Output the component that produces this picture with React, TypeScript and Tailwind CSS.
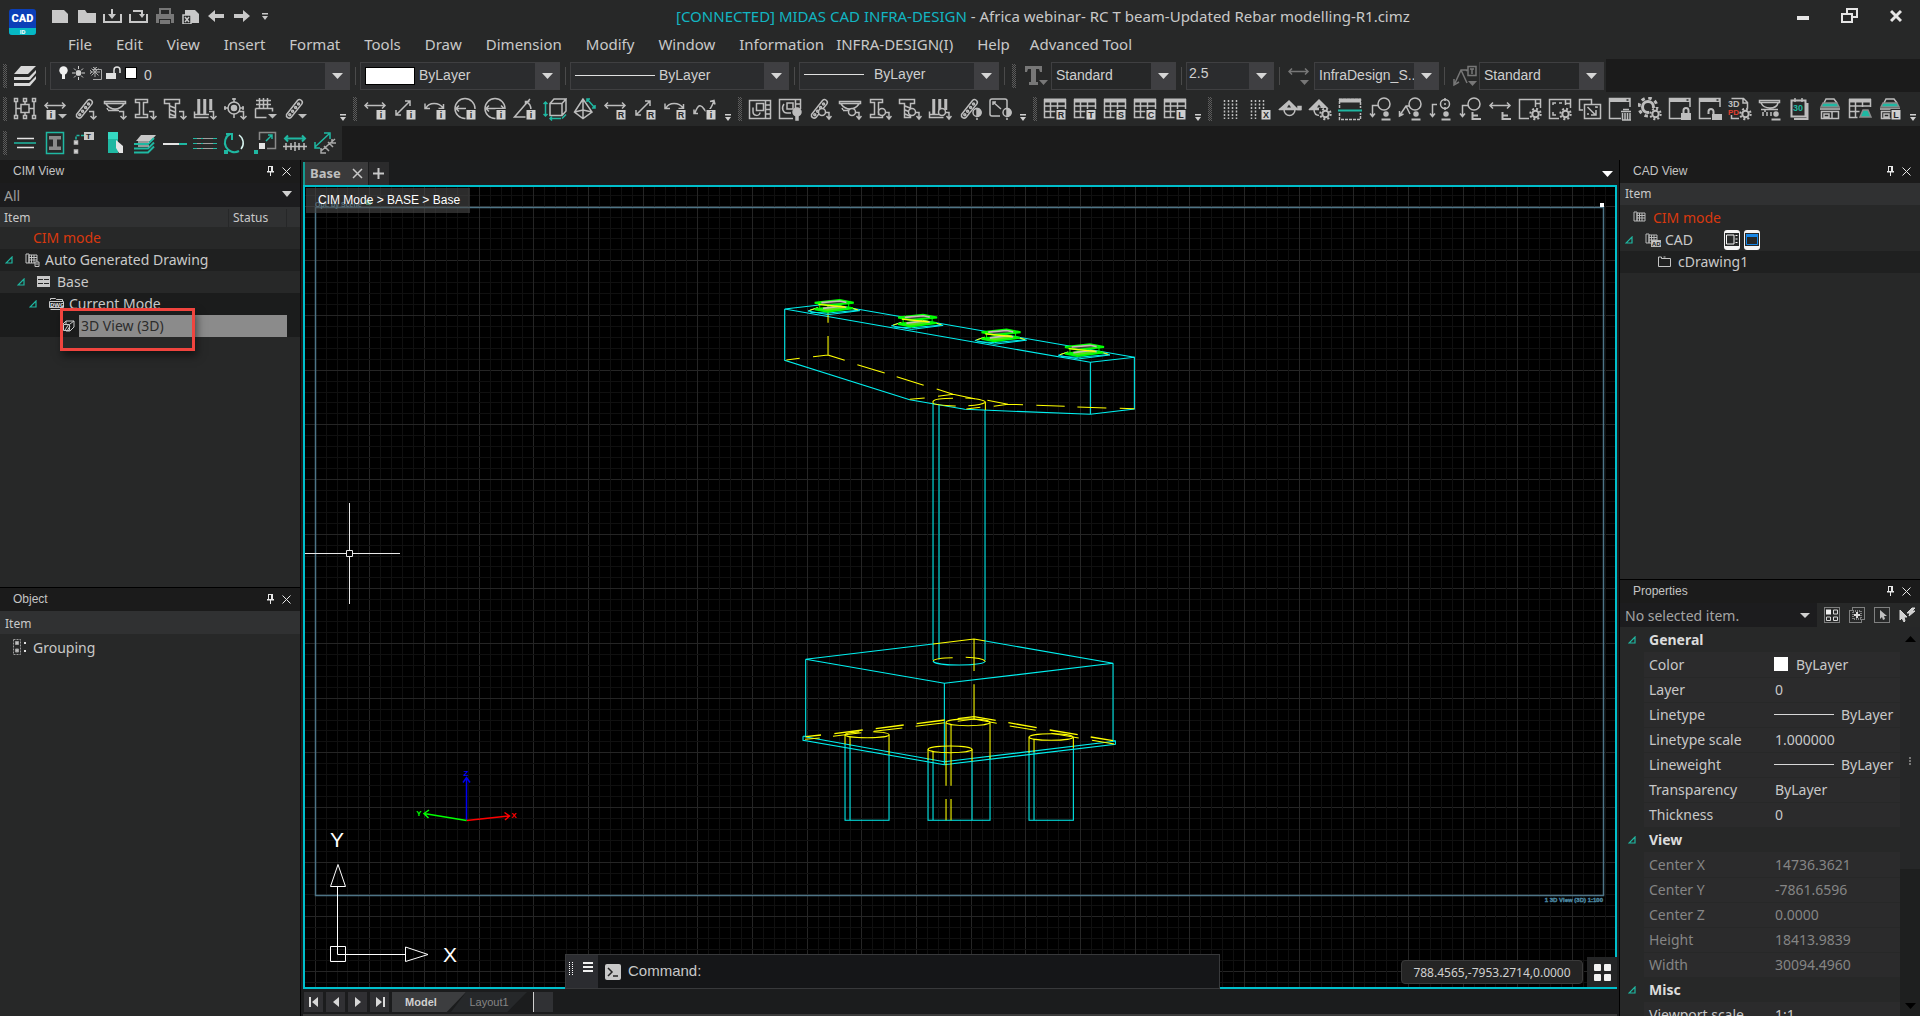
import type { ReactNode } from 'react';
import { clsx } from 'clsx';

const TEAL = '#1fb8a2';

/* ---------- Icons ---------- */

const barShape = (
  <>
    <path d="M3.5 17.5 14.5 3.5a2.8 2.8 0 0 1 4.4 3.4L8 20.4a2.8 2.8 0 0 1-4.5-2.9z" />
    <circle cx="15.5" cy="7" r="1" />
    <circle cx="12.6" cy="10.6" r="1" />
    <circle cx="9.6" cy="14.2" r="1" />
    <circle cx="6.8" cy="17.8" r="1" />
  </>
);

const windowShape = (
  <>
    <path d="M22 10V1.5H1.5v20H13" />
    <path d="M1 3h21" strokeWidth="4" />
    <path d="M18.5 3h2" stroke="#272828" />
  </>
);

const bases: Record<string, ReactNode> = {
  none: null,
  frame: (
    <path d="M1.5 1.5h3v3h-3zM10.5 1.5h3v3h-3zM19.5 1.5h3v3h-3zM1.5 18.5h3v3h-3zM10.5 18.5h3v3h-3zM19.5 18.5h3v3h-3zM3 5v13M21 5v13M8 7.5h8v8H8zM12 5v2M12 16v2M3 11.5h5M16 11.5h5" />
  ),
  span: <path d="M2 8.5h20M5 5.5l-3 3 3 3M19 5.5l3 3-3 3" />,
  bar: barShape,
  dish: <path d="M1.5 4.5h21v2h-21zM3 7c3 4 5 5 9 5s6-1 9-5M5 13.5h11M5 13l-1-2" />,
  beam: <path d="M2.5 2.5h12v3h-4v12h4v3h-12v-3h4v-12h-4z" />,
  bolt: <path d="M1.5 2.5h15v4h-4v14h-6v-14h-5zM7 9l5 2M7 13l5 2M7 17l5 2" />,
  piles: <path d="M5 2v15M6.5 2v15M11 2v15M12.5 2v15M17 2v11M18.5 2v11M1.5 14.5v6h14M2 17.5h14" />,
  target: (
    <>
      <circle cx="11" cy="11" r="6" />
      <circle cx="11" cy="11" r="2.5" fill="currentColor" />
      <path d="M11 1v4M11 17v4M1 11h4M17 11h4M9 2h4M2 9v4M20 9v4" />
    </>
  ),
  mesh: <path d="M6.5 1v10M10.5 1v10M14.5 1v10M3 3.5h15M3 7.5h15M2.5 11.5h17v3M2.5 11.5v9h11" />,
  diag: <path d="M3 18 17 4M12 4h5v5M3 13v5h5" />,
  arc: <path d="M3 11c3-6 13-6 17 0M2 6.5v5h5M20.5 7v4.5h-5" />,
  radius: (
    <>
      <circle cx="12" cy="11.5" r="10" />
      <path d="M3 11.5h10M6 8.5l-3 3 3 3" />
    </>
  ),
  diameter: (
    <>
      <circle cx="12" cy="11.5" r="10" />
      <path d="M3 11.5h18M6 8.5l-3 3 3 3M18 8.5l3 3-3 3" />
    </>
  ),
  angle: <path d="M14 20H1.5L17 2M13 5c3 1 5 4 5 8M12.5 8V4.5h4" />,
  cube: (
    <>
      <path d="M7 6.5h12v12H7zM7 6.5l4-4.5h12l-4 4.5M23 2v12l-4 4.5" />
      <path d="M2.5 5v14M.5 7l2-2 2 2M.5 17l2 2 2-2M7 21.5h11M9 19.5l-2 2 2 2M19 21.5l4-4" stroke={TEAL} />
    </>
  ),
  pyramid: (
    <>
      <path d="M10 2 1.5 15 10 21.5 19 15zM10 2v19M1.5 15 10 13l9 2" />
      <path d="M14 2l8 9M14 5V2h3M22 8v3h-3" stroke={TEAL} />
    </>
  ),
  spline: <path d="M2 16c3-9 6-9 9-4s6 2 10-8M17 4.5l4-1 1 4M1 12.5v4h4" />,
  section: <path d="M1.5 3.5h21v18h-21zM17.5 3.5v18M18 8h4M18 12.5h4M18 17h4M8.5 6.5h7v7h-7zM5 10.5v4c0 5 7 5 7 1" />,
  sectionBulb: (
    <>
      <path d="M15 21.5H1.5v-19h21V12M17.5 3v8M18 7h4M6 7c-3 4-1 9 3 9h4M9 6h6v6H9z" />
      <circle cx="19" cy="15" r="4" fill="currentColor" />
      <path d="M18 19v4h2v-4" fill="currentColor" />
    </>
  ),
  plate: <path d="M12 19H4c-1 0-2-1-2-2V4c0-1 1-2 2-2h13c1 0 2 1 2 2v7M5 5l8 7M5 8V5h3" />,
  table: (
    <>
      <path d="M1.5 2v18.5h10M22.5 2v10M7.5 4v16M14.5 4v8M1.5 9h21M1.5 14.5h11" />
      <path d="M1 3.5h22" strokeWidth="4" />
    </>
  ),
  dots: <path d="M6.5 3v19M10.5 3v19M14.5 3v19M18.5 3v19" strokeDasharray="2 1.5" />,
  dotsHalf: <path d="M3.5 3v19M7.5 3v19M11.5 3v9M15.5 3v9" strokeDasharray="2 1.5" />,
  marker: (
    <>
      <path d="M1 12.5h22M6 12.5a5.5 6 0 0 0 11 0" />
      <path d="M2 12l9-8 8 8z" fill="currentColor" />
      <path d="M9 10.5l2-3 2 3z" fill="#272828" stroke="none" />
      <path d="M20 9.5h3v3h-3z" fill="currentColor" />
    </>
  ),
  markerHalf: (
    <>
      <path d="M1 12.5h12M6 12.5c0 5 3 6 6 6" />
      <path d="M2 12l9-9 9 9z" fill="currentColor" />
      <path d="M9 10.5l2-3 2 3z" fill="#272828" stroke="none" />
    </>
  ),
  cut: (
    <>
      <path d="M1.5 11V2.5h21V11M1.5 16v6.5h21V16" strokeDasharray="3 1" />
      <path d="M1 3.5h22" strokeWidth="4" />
      <path d="M0 13.5h24" stroke={TEAL} strokeWidth="2" />
    </>
  ),
  leaderRound: (
    <>
      <circle cx="16" cy="7" r="6" />
      <path d="M10 8.5H4.5V19M2 16.5l2.5 3 2.5-3" />
    </>
  ),
  leaderSplit: (
    <>
      <circle cx="17" cy="7" r="6" />
      <path d="M11 9H8L2 18M8 9l4 8M1.5 14v5l4-2" />
    </>
  ),
  leaderTarget: (
    <>
      <circle cx="17" cy="7" r="4.5" />
      <path d="M17 1v3M17 10v3M9 7.5H4.5V19M2 16.5l2.5 3 2.5-3M16 7h2" />
    </>
  ),
  page: <path d="M12 21.5H1.5v-19h21v9M17.5 3v7M18 6.5h4" />,
  pageFit: <path d="M12 21.5H1.5v-19h21v9M17.5 3v5M5 8V6h3M11 6h3M5 15v3h3M18 6.5h4" />,
  copyFit: <path d="M1.5 10V2.5h12v5M5 13H1.5v-3M6.5 7.5h16v14h-16zM9.5 10l8 8M18 13v5h-5M10 18v-2M19 11v-1h-2" />,
  window: windowShape,
  gear: (
    <g>
      <circle cx="10" cy="10" r="5.5" strokeWidth="3" />
      <circle cx="10" cy="10" r="9" strokeWidth="3" strokeDasharray="3.5 3.56" />
    </g>
  ),
  pdf: (
    <>
      <path d="M3.5 1.5h12l4 4v6M15 2v4h4M3.5 18v3.5h8" />
      <rect x="0" y="3" width="12" height="15" fill="#272828" stroke="none" />
      <text x="0" y="10" fontSize="9" fontWeight="700" fill="currentColor" stroke="none">3D</text>
      <text x="0" y="18" fontSize="8" fontWeight="700" fill="#e0402f" stroke="none">PDF</text>
    </>
  ),
  shower: <path d="M1.5 3.5h20v2h-20zM3 6c2 4 5 5 9 5s7-1 8-5M3 12.5h17M5 15v4M9 15v4M13 15v4M7 12v3" />,
  calendar: (
    <>
      <path d="M3.5 3.5h14v16h-14zM19.5 6v16H6" strokeWidth="2" />
      <path d="M7 1v4M14 1v4" />
      <text x="5" y="14" fontSize="9" fontWeight="700" fill={TEAL} stroke="none">30</text>
    </>
  ),
  house: (
    <>
      <path d="M6 6l2-4h8l3 4M2 12h20M3.5 14.5h17v7h-17zM6 17h5v3H6zM14 15v6" />
      <path d="M3 10l2-4h14l2 4z" fill={TEAL} stroke="#8a8a8a" />
    </>
  ),
  tableHouse: (
    <>
      <path d="M1.5 2v18.5h8M22.5 2v8M7.5 4v16M14.5 4v6M1.5 9h21M1.5 14.5h10" />
      <path d="M1 3.5h22" strokeWidth="4" />
      <path d="M12 20l3-7h5l3 7z" fill={TEAL} stroke="#8a8a8a" />
    </>
  ),
  /* drawing toolbar */
  centerLine: (
    <>
      <path d="M4 7.5h17M4 16.5h17" stroke="#e4e4e4" />
      <path d="M1 12h22" stroke={TEAL} />
    </>
  ),
  profile: (
    <>
      <path d="M3.5 1.5h17v21h-17z" stroke={TEAL} />
      <path d="M6 5h12v3.5h-4v7h4V19H6v-3.5h4v-7H6z" fill="#8a8a8a" stroke="none" />
    </>
  ),
  leaderText: (
    <>
      <path d="M3 13V4.5h10" stroke={TEAL} strokeDasharray="3 1.5" />
      <path d="M1.5 10h3v3h-3zM1.5 19h3v3h-3z" fill="#e4e4e4" />
      <path d="M11 1h10v8H11z" fill="#c8c8c8" stroke="none" />
      <text x="13" y="8" fontSize="8" fontWeight="700" fill="#272828" stroke="none">T</text>
    </>
  ),
  fill: (
    <>
      <path d="M5 1h10v21H5z" fill={TEAL} stroke="none" />
      <path d="M5 1h10v7H5z" fill="#35d8c2" stroke="none" />
      <path d="M13 9l7 6v7h-4l-3-5z" fill="#e4e4e4" stroke="none" />
    </>
  ),
  layersTeal: (
    <>
      <path d="M8 4h15l-5 6H3z" fill="#c8c8c8" stroke="none" />
      <path d="M1 13h14l6-6M1 17.5h14l6-6M1 21.5h14l6-6" stroke={TEAL} strokeWidth="2" />
      <path d="M5 11h11M5 15h11" />
    </>
  ),
  lineMix: (
    <>
      <path d="M0 13h16" stroke="#e4e4e4" strokeWidth="2" />
      <path d="M16 13h8" stroke={TEAL} strokeWidth="2" />
    </>
  ),
  lines: (
    <>
      <path d="M0 7.5h24M0 12.5h24M0 17.5h24" stroke={TEAL} strokeWidth="1" />
      <path d="M4 7.5h4M10 7.5h10M4 12.5h4M10 12.5h10M4 17.5h4M10 17.5h10" stroke="#a0a0a0" strokeWidth="1" />
    </>
  ),
  rotate: (
    <>
      <path d="M7 3a9.5 9.5 0 0 0 9 17M3 3h6v6" stroke={TEAL} strokeWidth="2" />
      <path d="M16 4a9.5 9.5 0 0 1 2 14" stroke="#d8f5f0" />
      <path d="M1 19h4v4H1z" fill={TEAL} stroke="none" />
    </>
  ),
  scale: (
    <>
      <path d="M6.5 9V1.5h16v16H14" stroke="#8a8a8a" />
      <path d="M13 10l6-6M15 4h4v4" stroke={TEAL} />
      <path d="M6 12h6v6H6z" fill="#e4e4e4" stroke="none" />
      <path d="M1 19h4v4H1z" fill={TEAL} stroke="none" />
    </>
  ),
  stretch: (
    <>
      <path d="M2 7.5h20M5 4.5l-3 3 3 3M19 4.5l3 3-3 3" stroke={TEAL} strokeWidth="2" />
      <path d="M0 15.5h24M3 12v7M8 12v7M12 11v9M16 12v7M21 12v7" />
    </>
  ),
  offset: (
    <>
      <path d="M2 16 16 3M11 2h6v6M2 11v6h5" stroke={TEAL} />
      <path d="M8 20 22 8M11 15l5 5M15 11l5 5M19 8v4h4M8 17v5h5" stroke="#a8a8a8" />
    </>
  ),
};

const badges: Record<string, ReactNode> = {
  turn: <path d="M16 14.5h4.5v7M17.5 19l3 3 3-3" />,
  caret: <path d="M15 17h9l-4.5 4.5z" fill="currentColor" stroke="none" />,
  shape: (
    <>
      <circle cx="14" cy="15" r="3.5" fill="#272828" />
      <path d="M18 15.5h3v6M18.5 19l2.5 3 2.5-3" />
    </>
  ),
  contrast: (
    <>
      <circle cx="19" cy="15.5" r="4" />
      <path d="M19 11.5a4 4 0 0 1 0 8z" fill="currentColor" />
      <path d="M18 22h2" />
    </>
  ),
  gear: (
    <g>
      <rect x="11" y="11" width="13" height="13" fill="#272828" stroke="none" />
      <circle cx="17.5" cy="17" r="3.2" strokeWidth="2" />
      <circle cx="17.5" cy="17" r="5.2" strokeWidth="2" strokeDasharray="2 2.08" />
    </g>
  ),
  person: (
    <>
      <circle cx="18" cy="17" r="2" fill="currentColor" />
      <path d="M13.5 22.5h9" strokeWidth="2" />
    </>
  ),
  legend: <path d="M14.5 15v8M15 18.5h5M15 22h8" strokeWidth="2" />,
  trash: <path d="M13 14.5h10M15 12.5h6M14.5 16v7M17 16v7M19.5 16v7M22 16v7M14 23h9" />,
  lock: (
    <>
      <path d="M13 16h10v7H13z" fill="currentColor" stroke="none" />
      <path d="M15.5 16v-2.5a2.5 2.5 0 0 1 5 0V16" strokeWidth="2" />
    </>
  ),
  unlock: (
    <>
      <path d="M14 17h10v6H14z" fill="currentColor" stroke="none" />
      <path d="M10.5 17v-2.5a2.5 2.5 0 0 1 5 0V17" strokeWidth="2" />
    </>
  ),
};

function Glyph({ base, badge }: { base: string; badge?: string }) {
  const letter = badge && badge.length === 1 ? badge : '';
  const left = base === 'span' && badge === 'info';
  return (
    <svg width="24" height="24" viewBox="0 0 24 24" fill="none" stroke="currentColor" strokeWidth="1.5" fontFamily="Liberation Sans, sans-serif">
      {bases[base]}
      {badge && badges[badge]}
      {left && badges.caret}
      {(letter || left) && (
        <>
          <rect x={left ? 3 : 13} y="12.5" width="10" height="10.5" fill="#cfcfcf" stroke="#272828" strokeWidth="1" />
          <text x={left ? 8 : 18} y="21" fontSize="9" fontWeight="700" textAnchor="middle" fill="#272828" stroke="none">
            {left ? 'i' : letter}
          </text>
        </>
      )}
    </svg>
  );
}

type Tool = [label: string, base: string, badge?: string];

const structureTools: Tool[] = [
  ['Frame', 'frame'],
  ['Span info', 'span', 'info'],
  ['Rebar', 'bar', 'turn'],
  ['Deck', 'dish', 'turn'],
  ['Girder', 'beam', 'turn'],
  ['Pier', 'bolt', 'turn'],
  ['Piles', 'piles', 'turn'],
  ['Target', 'target', 'turn'],
  ['Mesh', 'mesh', 'caret'],
  ['Rebar list', 'bar', 'caret'],
];
const dimensionTools: Tool[] = [
  ['Linear', 'span', 'i'],
  ['Aligned', 'diag', 'i'],
  ['Arc length', 'arc', 'i'],
  ['Radius', 'radius', 'i'],
  ['Diameter', 'diameter', 'i'],
  ['Angle', 'angle', 'i'],
  ['Box', 'cube'],
  ['Slope', 'pyramid'],
  ['Linear rebar', 'span', 'R'],
  ['Aligned rebar', 'diag', 'R'],
  ['Arc rebar', 'arc', 'R'],
  ['Spline', 'spline', 'i'],
];
const sectionTools: Tool[] = [
  ['Section view', 'section'],
  ['Section light', 'sectionBulb'],
  ['Rebar shape', 'bar', 'shape'],
  ['Deck shape', 'dish', 'shape'],
  ['Girder shape', 'beam', 'shape'],
  ['Pier shape', 'bolt', 'shape'],
  ['Pile shape', 'piles', 'shape'],
  ['Rebar display', 'bar', 'contrast'],
  ['Plate display', 'plate', 'contrast'],
];
const tableTools: Tool[] = [
  ['Rebar table', 'table', 'R'],
  ['Text table', 'table', 'T'],
  ['Section table', 'table', 'S'],
  ['Column table', 'table', 'C'],
  ['Layer table', 'table', 'L'],
];
const drawingTools: Tool[] = [
  ['Guides', 'dots'],
  ['Remove guides', 'dotsHalf', 'X'],
  ['Level mark', 'marker'],
  ['Level settings', 'markerHalf', 'gear'],
  ['Cut line', 'cut'],
  ['Balloon', 'leaderRound', 'person'],
  ['Split balloon', 'leaderSplit', 'person'],
  ['Target balloon', 'leaderTarget', 'person'],
  ['Balloon align', 'leaderRound', 'legend'],
  ['Span align', 'span', 'legend'],
  ['Sheet settings', 'page', 'gear'],
  ['Viewport settings', 'pageFit', 'gear'],
  ['Copy fit', 'copyFit'],
  ['Delete view', 'window', 'trash'],
  ['Settings', 'gear', 'gear'],
  ['Lock view', 'window', 'lock'],
  ['Unlock view', 'window', 'unlock'],
  ['3D PDF', 'pdf', 'gear'],
  ['Deck person', 'shower', 'person'],
  ['Schedule', 'calendar'],
  ['Quantity', 'house'],
  ['Quantity table', 'tableHouse'],
  ['Quantity layer', 'house', 'L'],
];
const editTools: Tool[] = [
  ['Center line', 'centerLine'],
  ['Profile', 'profile'],
  ['Leader', 'leaderText'],
  ['Fill', 'fill'],
  ['Layers', 'layersTeal'],
  ['Line', 'lineMix'],
  ['Multi line', 'lines'],
  ['Rotate', 'rotate'],
  ['Scale', 'scale'],
  ['Stretch', 'stretch'],
  ['Offset', 'offset'],
];

function Grip() {
  return (
    <span className="flex w-[10px] shrink-0 items-center justify-center">
      <svg width="4" height="24" viewBox="0 0 4 24" fill="#5c5c5c">
        {Array.from({ length: 12 }, (_, i) => (
          <path key={i} d={`M0 ${i * 2}h1v1H0zM2 ${i * 2}h1v1H2zM1 ${i * 2 + 1}h1v1H1zM3 ${i * 2 + 1}h1v1H3z`} />
        ))}
      </svg>
    </span>
  );
}

function Overflow() {
  return (
    <button aria-label="More tools" className="flex w-[15px] shrink-0 items-end justify-center pb-1 text-[#d0d0d0]">
      <svg width="6" height="8" viewBox="0 0 6 8" fill="currentColor">
        <path d="M0 0h6v1.5H0zM0 3h6L3 7z" />
      </svg>
    </button>
  );
}

function ToolGroup({ tools }: { tools: Tool[] }) {
  return (
    <>
      <Grip />
      {tools.map(([label, base, badge]) => (
        <button key={label} aria-label={label} className="flex w-[30px] shrink-0 items-center justify-center text-[#bdbdbd]">
          <Glyph base={base} badge={badge} />
        </button>
      ))}
    </>
  );
}

/* ---------- Header ---------- */

const menus = ['File', 'Edit', 'View', 'Insert', 'Format', 'Tools', 'Draw', 'Dimension', 'Modify', 'Window', 'Information'];

const quickIcons: [string, ReactNode][] = [
  ['New', <path d="M1 2h12l4 4v9H1z" />],
  ['Open', <path d="M1 2h7l2 3h9v10H1z" />],
  ['Save', <path d="M0 6h2v7h15V6h2v9H0zM8 1h2v5h3l-4 5-4-5h3z" />],
  ['Save as', <path d="M0 6h2v7h15V6h2v9H0zM4 2h10v4h2l-3 4-3-4h2V4H4z" />],
  ['Print', <path fill="#777" d="M4 0h12v6h3v9h-3v-4H4v4H1V6h3zM6 2v4h8V2zM5 12h10v4H5z" />],
  ['Close drawing', (
    <>
      <path d="M4 2h10l4 4v9H4z" />
      <path d="M2 7h8v9H2z" fill="#272828" stroke="#c8c8c8" strokeWidth="1.5" />
      <path d="M4 9l4 5M8 9l-4 5" stroke="#c8c8c8" strokeWidth="1.5" />
    </>
  )],
  ['Undo', <path d="M1 8l7-6v4h9v4H8v4z" />],
  ['Redo', <path d="M17 8l-7-6v4H1v4h9v4z" />],
];

function TitleBar() {
  return (
    <header className="flex h-[59px] shrink-0 text-[#c9c9c9]">
      <div className="w-[43px] shrink-0 pt-[9px] pl-[9px]">
        <div className="flex h-[26px] w-[27px] flex-col overflow-hidden rounded-[3px] bg-[#0b3fb8] text-center font-['Roboto',sans-serif] text-white">
          <span className="h-[19px] text-[11px] leading-[19px] font-black">CAD</span>
          <span className="h-[7px] bg-[#06b9c4] text-[6px] leading-[7px] font-bold">ID</span>
        </div>
      </div>
      <div className="flex min-w-0 flex-1 flex-col">
        <div className="flex h-8 items-center">
          <div className="flex w-[633px] shrink-0 items-center pl-2">
            {quickIcons.map(([label, icon]) => (
              <button key={label} aria-label={label} className="w-[26px] shrink-0">
                <svg width="20" height="16" viewBox="0 0 20 16" fill="#c8c8c8" fillRule="evenodd">{icon}</svg>
              </button>
            ))}
            <button aria-label="Customize quick access" className="pl-[3px]">
              <svg width="6" height="8" viewBox="0 0 6 8" fill="#c8c8c8"><path d="M0 1h6v1.5H0zM0 4h6L3 8z" /></svg>
            </button>
          </div>
          <h1 className="flex-1 truncate text-[15px]">
            <span className="text-[#12b5c2]">[CONNECTED] MIDAS CAD INFRA-DESIGN</span> - Africa webinar- RC T beam-Updated Rebar modelling-R1.cimz
          </h1>
          <div className="flex shrink-0 items-center gap-8 pr-[18px] text-[#e6e6e6]">
            <button aria-label="Minimize"><svg width="12" height="14" viewBox="0 0 12 14"><path d="M0 7h12v4H0z" fill="currentColor" /></svg></button>
            <button aria-label="Restore"><svg width="17" height="16" viewBox="0 0 17 16" fill="none" stroke="currentColor" strokeWidth="2"><path d="M1 6h10v8H1zM6 5V1h10v8h-4" /></svg></button>
            <button aria-label="Close"><svg width="12" height="14" viewBox="0 0 12 14" stroke="currentColor" strokeWidth="3"><path d="M1 2l10 10M11 2 1 12" /></svg></button>
          </div>
        </div>
        <nav className="flex h-6 items-center gap-6 pl-[25px] text-[15px]">
          {menus.map((m) => <button key={m}>{m}</button>)}
          <button className="-ml-3 whitespace-nowrap">INFRA-DESIGN(I)</button>
          <button>Help</button>
          <button className="-ml-1">Advanced Tool</button>
        </nav>
      </div>
    </header>
  );
}

interface ComboProps {
  label: string;
  value: string;
  className: string;
  selectClass?: string;
  children?: ReactNode;
}

function Combo({ label, value, className, selectClass = 'pl-[4px]', children }: ComboProps) {
  return (
    <div className={clsx('relative flex h-7 shrink-0 border border-[#3f3f41]', className)}>
      <select aria-label={label} className={clsx("w-full appearance-none bg-transparent font-['Liberation_Sans',sans-serif] text-[14px] text-[#cfcfcf] outline-none", selectClass)}>
        <option>{value}</option>
      </select>
      {children && <div className="pointer-events-none absolute inset-y-0 left-0 flex items-center">{children}</div>}
      <span className="pointer-events-none absolute inset-y-0 right-0 flex w-6 items-center justify-center bg-[#3f3f42] text-[#d6d6d6]">
        <svg width="11" height="6" viewBox="0 0 11 6" fill="currentColor"><path d="M0 0h11L5.5 6z" /></svg>
      </span>
    </div>
  );
}

const Divider = () => <span className="mr-[4px] ml-[5px] h-[18px] w-px shrink-0 bg-[#4a4a4a]" />;

function PropertyBar() {
  return (
    <div className="flex h-[33px] shrink-0 bg-[#1b1b1b]">
      <div className="flex items-center bg-[#272828] pr-[2px]">
        <Grip />
        <button aria-label="Layer manager" className="flex w-[30px] justify-center">
          <svg width="24" height="22" viewBox="0 0 24 22" fill="#d8d8d8">
            <path d="M8 1h15l-8 8H1zM1 12h15l7-7v3l-6 7H1zM1 18h15l7-7v3l-6 7H1z" />
          </svg>
        </button>
        <Divider />
        <Combo label="Layer" value="0" className="w-[300px] bg-[#2b2c2e]" selectClass="pl-[93px]">
          <div className="flex gap-[4px] pb-[5px] pl-[8px] text-[#d0d0d0]">
            <svg width="9" height="14" viewBox="0 0 9 14" fill="#f0f0f0"><circle cx="4.5" cy="4.5" r="4.2" /><path d="M3 8h3v5H3z" /></svg>
            <svg width="13" height="14" viewBox="0 0 13 14" stroke="currentColor"><circle cx="6.5" cy="7" r="2.5" fill="currentColor" /><path d="M6.5 0v3M6.5 11v3M0 7h3M10 7h3M2 2.5l2 2M11 2.5l-2 2M2 11.5l2-2M11 11.5l-2-2" /></svg>
            <svg width="13" height="14" viewBox="0 0 13 14" fill="none" stroke="#a8a8a8"><path d="M4 3.5h8.5v10H4M6 1v10M1 6h10M2.5 2.5l7 7M9.5 2.5l-7 7M4 1l2 2 2-2M1 4l2 2-2 2" /></svg>
            <svg width="15" height="14" viewBox="0 0 15 14" fill="#e0e0e0"><path d="M0 7h10v6H0z" /><path d="M8 7V4a3 3 0 0 1 6 0v3" fill="none" stroke="#e0e0e0" strokeWidth="1.5" /></svg>
            <span className="mt-px h-3 w-3 border border-black bg-white" />
          </div>
        </Combo>
        <Divider />
        <Combo label="Color" value="ByLayer" className="w-[200px] bg-[#2b2c2e]" selectClass="pl-[58px]">
          <span className="ml-[4px] h-[18px] w-[50px] border border-black bg-white" />
        </Combo>
        <Divider />
        <Combo label="Linetype" value="ByLayer" className="w-[219px] bg-[#2b2c2e]" selectClass="pl-[88px]">
          <span className="ml-[4px] h-px w-20 bg-[#e0e0e0]" />
        </Combo>
        <Divider />
        <Combo label="Lineweight" value="ByLayer" className="w-[200px] bg-[#2b2c2e]" selectClass="pl-[74px] pb-[3px]">
          <span className="mb-[2px] ml-[4px] h-px w-[60px] bg-[#e0e0e0]" />
        </Combo>
        <Divider />
        <Grip />
        <button aria-label="Text style" className="w-8 pl-[5px]">
          <svg width="24" height="22" viewBox="0 0 24 22" fill="#777"><path d="M1 1h17v6h-2l-1-3h-3v13h2v3H5v-3h2V4H4L3 7H1zM15 15h9l-4.5 5z" /></svg>
        </button>
        <Combo label="Text style" value="Standard" className="w-[125px] bg-[#262728]" />
        <Divider />
        <Combo label="Text height" value="2.5" className="w-[88px] bg-[#2b2c2e]" selectClass="pl-[2px] pb-[4px]" />
        <Divider />
        <button aria-label="Dimension style" className="w-[30px] pl-[4px]">
          <svg width="24" height="22" viewBox="0 0 24 22" fill="none" stroke="#777" strokeWidth="1.5"><path d="M1 6.5h19M4 3.5l-3 3 3 3M17 3.5l3 3-3 3" /><path d="M12 15h9l-4.5 5z" fill="#777" stroke="none" /></svg>
        </button>
        <Combo label="Dimension style" value="InfraDesign_S..." className="w-[125px] bg-[#2b2c2e]" />
        <Divider />
        <button aria-label="Leader style" className="w-[30px] pl-[4px]">
          <svg width="24" height="22" viewBox="0 0 24 22" fill="none" stroke="#777" strokeWidth="1.5"><path d="M2 18 8 5h6l-1 1M8 5l6 13M1 14v6l5-3M15 1.5h8v9h-8zM17 4h4M19 4v5" /><path d="M15 16h9l-4.5 5z" fill="#777" stroke="none" /></svg>
        </button>
        <Combo label="Leader style" value="Standard" className="w-[125px] bg-[#262728]" />
      </div>
    </div>
  );
}

/* ---------- Panels ---------- */

function PanelHeader({ title }: { title: string }) {
  return (
    <div className="flex h-[23px] shrink-0 items-center bg-[#1b1b1b] pr-[9px] pb-px pl-[13px]">
      <h2 className="flex-1 font-['Liberation_Sans',sans-serif] text-[12px] text-[#c4c4c4]">{title}</h2>
      <button aria-label={`Pin ${title}`} className="mr-[7px]">
        <svg width="9" height="10" viewBox="0 0 9 10" fill="#e8e8e8"><path d="M2 0h5v5h1v1.5H5V10H4V6.5H1V5h1zM3 1v4h2V1z" fillRule="evenodd" /></svg>
      </button>
      <button aria-label={`Close ${title}`}>
        <svg width="9" height="9" viewBox="0 0 9 9" stroke="#e8e8e8"><path d="M.5.5l8 8M8.5.5l-8 8" /></svg>
      </button>
    </div>
  );
}

function Expander({ label }: { label: string }) {
  return (
    <button aria-label={`Collapse ${label}`} className="flex w-5 shrink-0 items-center">
      <svg width="8" height="8" viewBox="0 0 8 8" fill="none" stroke={TEAL} strokeWidth="1.2"><path d="M7 1v6H1z" /></svg>
    </button>
  );
}

const gridPage = <path d="M1 1h3v9H1zM4 2h8v8H4zM6.5 2v8M9 2v8M4 4.5h8M4 7h8" />;

function CimView() {
  return (
    <section className="flex h-[428px] shrink-0 flex-col border-b border-black">
      <PanelHeader title="CIM View" />
      <div className="relative flex h-6 shrink-0 bg-[#1c1c1e]">
        <select aria-label="Filter" className="w-full appearance-none bg-transparent pl-[4px] text-[14px] text-[#9c9c9c]">
          <option>All</option>
        </select>
        <svg className="pointer-events-none absolute top-2 right-2" width="10" height="6" viewBox="0 0 10 6" fill="#d0d0d0"><path d="M0 0h10L5 6z" /></svg>
      </div>
      <div className="flex h-5 shrink-0 items-end bg-[#303132] pl-1 text-[12px] leading-[18px]">
        <span className="flex-1">Item</span>
        <span className="w-[58px] border-l border-[#262728] pl-[4px]">Status</span>
        <span className="w-[14px] border-l border-[#262728]">&nbsp;</span>
      </div>
      <ul className="text-[14px] leading-[22px]">
        <li className="pl-[33px] text-[#d8380f]">CIM mode</li>
        <li className="flex bg-[#1f2020] pl-[5px]">
          <Expander label="Auto Generated Drawing" />
          <svg className="mt-[4px] mr-[5px] shrink-0" width="15" height="14" viewBox="0 0 15 14" fill="none" stroke="#c4c4c4">
            {gridPage}
            <path d="M10 9h4v4.5h-4zM10.5 11h3" fill="#1f2020" />
          </svg>
          Auto Generated Drawing
        </li>
        <li className="flex pl-[17px]">
          <Expander label="Base" />
          <svg className="mt-[5px] mr-[7px] shrink-0" width="13" height="11" viewBox="0 0 13 11" fill="#c8c8c8"><path d="M0 0h13v11H0zM1 3v1h5V3zM7 3v1h5V3zM1 7v1h5V7zM7 7v1h5V7z" fillRule="evenodd" /></svg>
          Base
        </li>
        <li className="flex bg-[#1b1c1c] pl-[29px]">
          <Expander label="Current Mode" />
          <svg className="mt-[4px] mr-[5px] shrink-0" width="15" height="14" viewBox="0 0 15 14" fill="none" stroke="#c8c8c8">
            <path d="M1.5 3V1.5h5l1 1h6V4M1.5 12.5h12M.5 4.5h14v6H.5z" />
            <text x="1" y="10" fontSize="6" fontWeight="700" fill="#e0e0e0" stroke="none">DWG</text>
          </svg>
          Current Mode
        </li>
        <li className="relative flex bg-[#1b1c1c] pl-[62px]">
          <svg className="mt-[4px] mr-[4px] shrink-0" width="13" height="13" viewBox="0 0 13 13" fill="none" stroke="#c8c8c8"><path d="M1 5l3-3h8v6l-4 4H4M4 2v4M1.5 5.5h6v6h-6zM8 5l4-3M3 11l4-6M5 12l3-5" /></svg>
          <span className="mr-[13px] flex-1 bg-[#8b8b8b] pl-[2px] text-[#2c2c2c]">3D View (3D)</span>
          <span className="pointer-events-none absolute -top-[7px] left-[60px] h-[43px] w-[135px] border-[3px] border-[#f0443e] shadow-[2px_5px_8px_rgba(0,0,0,0.5)]" />
        </li>
      </ul>
    </section>
  );
}

function ObjectPanel() {
  return (
    <section className="flex-1">
      <PanelHeader title="Object" />
      <div className="flex h-[23px] items-end bg-[#303132] pl-[5px] text-[12px] leading-[20px]">Item</div>
      <div className="flex h-[26px] items-center pl-[13px] text-[14px]">
        <svg className="mr-[6px]" width="14" height="16" viewBox="0 0 14 16" fill="none" stroke="#9a9a9a">
          <path d="M.5.5h7v15h-7z" strokeDasharray="2 1" />
          <path d="M2.5 2.5h3v3h-3zM2.5 10h3v3h-3z" fill="#c0c0c0" />
          <path d="M11 3h2v2h-2zM11 11h2v2h-2z" fill="#e0e0e0" stroke="none" />
        </svg>
        Grouping
      </div>
    </section>
  );
}

function CadView() {
  return (
    <section className="flex h-[420px] shrink-0 flex-col border-b border-black">
      <PanelHeader title="CAD View" />
      <div className="flex h-[22px] shrink-0 items-center bg-[#303132] pl-[5px] text-[12px]">Item</div>
      <ul className="pt-[2px] text-[14px] leading-[22px]">
        <li className="flex pl-[13px] text-[#d8380f]">
          <svg className="mt-[4px] mr-[7px]" width="13" height="12" viewBox="0 0 13 12" fill="none" stroke="#b8b8b8">{gridPage}</svg>
          CIM mode
        </li>
        <li className="flex items-center pl-[5px]">
          <Expander label="CAD" />
          <svg className="mr-[4px]" width="16" height="14" viewBox="0 0 16 14" fill="none" stroke="#b8b8b8">
            {gridPage}
            <rect x="6.5" y="7.5" width="9" height="6" fill="#c8c8c8" />
            <text x="7" y="13" fontSize="6" fontWeight="700" fill="#262828" stroke="none">AD</text>
          </svg>
          CAD
          <button aria-label="Model sheet" className="ml-[31px]">
            <svg width="16" height="20" viewBox="0 0 16 20"><rect width="16" height="20" rx="3" fill="#f4f4f4" /><path d="M1 3h14v13H1z" fill="#262828" /><path d="M2.5 5h7.5v9H2.5zM11.5 5.5h2M11.5 9h2M11.5 12.5h2" stroke="#f4f4f4" fill="none" /></svg>
          </button>
          <button aria-label="Layout sheet" className="ml-[4px]">
            <svg width="16" height="20" viewBox="0 0 16 20"><rect width="16" height="20" rx="3" fill="#f4f4f4" /><path d="M1 3h14v13H1z" fill="#262828" /><path d="M2.5 6.5h11v8h-11z" stroke="#1687e8" fill="none" /><path d="M2 4h12v3H2z" fill="#1687e8" /></svg>
          </button>
        </li>
        <li className="flex bg-[#1f2020] pl-[38px]">
          <svg className="mt-[5px] mr-[7px]" width="13" height="11" viewBox="0 0 13 11" fill="none" stroke="#c4c4c4"><path d="M.5 10.5V1h3v1.5h9v8zM5.5 1h2" /></svg>
          cDrawing1
        </li>
      </ul>
    </section>
  );
}

interface PropertyRow {
  name: string;
  value: string;
  mark?: 'swatch' | 'line';
}

const propertyGroups: { title: string; muted?: boolean; rows: PropertyRow[] }[] = [
  {
    title: 'General',
    rows: [
      { name: 'Color', value: 'ByLayer', mark: 'swatch' },
      { name: 'Layer', value: '0' },
      { name: 'Linetype', value: 'ByLayer', mark: 'line' },
      { name: 'Linetype scale', value: '1.000000' },
      { name: 'Lineweight', value: 'ByLayer', mark: 'line' },
      { name: 'Transparency', value: 'ByLayer' },
      { name: 'Thickness', value: '0' },
    ],
  },
  {
    title: 'View',
    muted: true,
    rows: [
      { name: 'Center X', value: '14736.3621' },
      { name: 'Center Y', value: '-7861.6596' },
      { name: 'Center Z', value: '0.0000' },
      { name: 'Height', value: '18413.9839' },
      { name: 'Width', value: '30094.4960' },
    ],
  },
  { title: 'Misc', rows: [{ name: 'Viewport scale', value: '1:1' }] },
];

const selectionIcons: [string, ReactNode][] = [
  ['Quick select', (
    <>
      <path d="M.5.5h15v15H.5z" strokeDasharray="1 1" />
      <path d="M9.5 3h4v4h-4zM2.5 10h4v3.5h-4zM9.5 10h4v3.5h-4z" />
      <path d="M2 2.5h5v5H2z" fill="#f0f0f0" stroke="none" />
    </>
  )],
  ['Add to selection', (
    <>
      <path d="M3.5.5h12v12h-3v3H.5v-12h3z" strokeDasharray="1 1" />
      <path d="M4 4h8v8H4z" strokeDasharray="1 1" />
      <path d="M8 5v6M5 8h6" strokeWidth="2" />
    </>
  )],
  ['Select objects', (
    <>
      <path d="M.5.5h15v15H.5z" strokeDasharray="1 1" />
      <path d="M6 3v9l2-2 1 3 2-1-1-3h3z" fill="#c0c0c0" stroke="none" />
    </>
  )],
  ['Toggle pick add', <path d="M1 3v10l2-2 2 4 1-1-1-4h3zM8 6l5-5h3l-3 3h3l-6 5 1-3z" fill="#d0d0d0" />],
];

function Properties() {
  return (
    <section className="flex min-h-0 flex-1 flex-col">
      <PanelHeader title="Properties" />
      <div className="flex h-6 shrink-0 items-center">
        <div className="relative flex h-full w-[197px] shrink-0 bg-[#1c1c1e]">
          <select aria-label="Selection" className="w-full appearance-none bg-transparent pl-[5px] text-[14px] text-[#a4a4a4]">
            <option>No selected item.</option>
          </select>
          <svg className="pointer-events-none absolute top-[10px] right-[7px]" width="10" height="5" viewBox="0 0 10 5" fill="#d0d0d0"><path d="M0 0h10L5 5z" /></svg>
        </div>
        <div className="flex gap-[9px] overflow-hidden pl-[7px]">
          {selectionIcons.map(([label, icon]) => (
            <button key={label} aria-label={label} className="shrink-0">
              <svg width="16" height="16" viewBox="0 0 16 16" fill="none" stroke="#d8d8d8">{icon}</svg>
            </button>
          ))}
        </div>
      </div>
      <div className="flex min-h-0 flex-1">
        <div className="min-w-0 flex-1 overflow-hidden">
          <table className="w-full table-fixed text-left text-[14px]">
            <colgroup>
              <col className="w-[24px]" />
              <col className="w-[128px]" />
              <col />
            </colgroup>
            {propertyGroups.map((group) => (
              <tbody key={group.title}>
                <tr className="h-[25px]">
                  <td className="pl-[8px]"><Expander label={group.title} /></td>
                  <th colSpan={2} className="pl-[5px] font-bold text-[#dcdcdc]">{group.title}</th>
                </tr>
                {group.rows.map((row) => (
                  <tr key={row.name} className={clsx('h-[25px]', group.muted ? 'text-[#858585]' : 'text-[#c8c8c8]')}>
                    <td />
                    <th className="border-b border-[#272828] bg-[#2b2b2c] pl-[5px] font-normal">{row.name}</th>
                    <td className="border-b border-[#272828] bg-[#2b2b2c] pl-[3px]">
                      <span className="flex items-center whitespace-nowrap">
                        {row.mark === 'swatch' && <span className="mr-2 -ml-px h-[14px] w-[14px] bg-white" />}
                        {row.mark === 'line' && <span className="mr-[7px] -ml-px h-px w-[60px] bg-[#d8d8d8]" />}
                        {row.value}
                      </span>
                    </td>
                  </tr>
                ))}
              </tbody>
            ))}
          </table>
        </div>
        <div className="flex w-5 shrink-0 flex-col items-center bg-[#1e1f1f]">
          <div className="flex h-[242px] w-full flex-col items-center justify-between bg-[#262728] pt-[9px]">
            <svg width="11" height="6" viewBox="0 0 11 6"><path d="M0 6h11L5.5 0z" /></svg>
            <svg className="mb-[104px]" width="2" height="8" viewBox="0 0 2 8" fill="#777"><path d="M0 0h2v2H0zM0 3h2v2H0zM0 6h2v2H0z" /></svg>
          </div>
          <svg className="mt-auto mb-[7px]" width="11" height="6" viewBox="0 0 11 6"><path d="M0 0h11L5.5 6z" /></svg>
        </div>
      </div>
    </section>
  );
}

/* ---------- Drawing area ---------- */

const CYAN = '#00f0f0';
const YELLOW = '#ffff00';

const GRID = 164 / 15;

function GridLines() {
  return (
    <g shapeRendering="crispEdges">
      {Array.from({ length: 240 }, (_, i) => {
        const x = Math.round(369 - 109 + i * GRID);
        const y = Math.round(315 - 15 * GRID + i * GRID);
        const stroke = i % 5 === 0 ? '#252525' : '#101010';
        return <path key={i} d={`M${x + 0.5} 0v2200M0 ${y + 0.5}h2800`} stroke={stroke} />;
      })}
    </g>
  );
}

/* elastomeric bearing on the pier cap */
function Bearing({ x, y }: { x: number; y: number }) {
  return (
    <g transform={`translate(${x} ${y})`} strokeWidth="3">
      <path d="M145 93l28-10M145 93l60 11 95-12-30-8M152 97l53 2 90-8" stroke={CYAN} />
      <path d="M150 91l25-8M273 83l22 7" stroke={YELLOW} />
      <path d="M165 88l75-9 40 6-78 10z" fill="#5fe010" stroke="#0f0" strokeWidth="6" />
      <path d="M190 85l50-6 20 3" stroke="#c8b8b8" strokeWidth="5" />
      <path d="M180 72v14M267 70v13M238 66v14" stroke="#0f0" />
      <path d="M165 68l75-8 42 8-78 8z" fill="#404040" stroke="#0f0" strokeWidth="6" />
      <path d="M185 68l55-5 20 4" stroke="#c8b8b8" strokeWidth="5" />
      <path d="M176 73l80 8" stroke={YELLOW} strokeWidth="4" />
    </g>
  );
}

function Pier() {
  return (
    <>
      <g transform="translate(759.7 280) scale(0.33333)" strokeWidth="3.2">
        <g stroke={CYAN}>
          <path d="M75 87v154l375 118 165 29 377 15 132-16V232l-132 15L75 87l130-15 919 160M992 247v156" />
          <path d="M520 370v770M538 374v765M676 390v750" />
        </g>
        <g stroke={YELLOW}>
          <path d="M205 72v56M205 168v57l50 16M80 240l40-5M160 230l45-5M293 254l82 25M411 290l81 26M531 327l49 16 65 13M683 361l62 12 45 1M830 376l85 3M953 381l87 3M1080 385l44 1M450 358l45-4M535 349l45-6M620 387l42-5M702 379l43-6" />
          <path d="M520 370v-6c4-5 25-9 60-9M520 370c8 5 30 6 68 8M617 354c35 2 56 6 60 12v24M676 367c-6 5-20 8-50 10" />
        </g>
        {[0, 1, 2, 3].map((i) => <Bearing key={i} x={i * 250.3} y={i * 44.3} />)}
      </g>
      <g transform="translate(779.7 620) scale(0.33333)" strokeWidth="3.2">
        <g stroke={CYAN}>
          <path d="M460 72 78 118l416 72 506-60-383-67M78 118v232M1000 130v234M494 190v244" />
          <path d="M460 123c4 16 154 16 157 0" />
          <path d="M70 349v12l424 73 513-61v-11M75 350l419 75 511-61M70 349h8M998 362h10" />
          <path d="M196 372v229h132V404M211 375v226M445 418v183h132V424M460 424v177M577 601h54V412M748 396v205h133V384M763 394v207" />
        </g>
        <g stroke={YELLOW}>
          <path d="M460 72 583 57l34 6M583 57v96M583 193v104" />
          <path d="M460 123c4-6 20-10 59-10M558 112c36 1 54 6 59 12" />
          <path d="M78 350l46-5M164 341l85-11M288 326l84-11M411 311l84-11M534 296l49-6 65 11M686 308l85 15M810 330l84 14M933 351l67 11" strokeWidth="4" />
          <path d="M76 358l44-4M160 349l85-11M283 334l85-10M408 319l87-11M534 304l49-7 68 13M690 318l78 13M815 340l82 14M937 361l66 11" />
          <ellipse cx="262" cy="344" rx="66" ry="9" strokeDasharray="180 40" />
          <ellipse cx="511" cy="388" rx="66" ry="10" />
          <ellipse cx="565" cy="307" rx="66" ry="10" />
          <ellipse cx="814" cy="351" rx="66" ry="10" strokeDasharray="290 36" />
          <path d="M196 344v28M211 350v26M328 344v60M445 388v32M460 394v28M577 388v36M631 308v108M748 352v46M763 358v38M881 352v32M499 308v189M514 313v184M499 537v64M514 537v64" />
        </g>
      </g>
    </>
  );
}

function Canvas() {
  return (
    <svg className="absolute inset-0 h-full w-full" fill="none" fontFamily="Liberation Sans, sans-serif">
      <g transform="translate(-305 -187)">
        <GridLines />
        <path d="M315.5 207.5h1288v688h-1288z" stroke="#4d7486" strokeWidth="1.5" />
        <Pier />
        <path d="M1600 203h4v4h-4z" fill="#fff" />
        <text x="315" y="207" fontSize="7" fontWeight="700" fill="#6fa8c4">Opt. by Scene</text>
        <text x="1603" y="902" fontSize="6" fontWeight="700" fill="#4a86a0" stroke="#4a86a0" strokeWidth="0.4" textAnchor="end">1 3D View (3D) 1:100</text>
        <path d="M366 200h5v5h-5z" fill="#3fd08a" />

        {/* crosshair */}
        <path d="M305 553.5h95M349.5 503v101" stroke="#e8e8e8" />
        <path d="M346.5 550.5h6v6h-6z" stroke="#e8e8e8" fill="#000" />

        {/* axis triad */}
        <g strokeWidth="1.5">
          <path d="M466.5 820V778M463 782.5l3.5-5 3.5 5" stroke="#0000f0" />
          <path d="M466.5 820.5l42-4.5M504.5 812.5l5 3.5-4.5 4" stroke="#f00" />
          <path d="M466.5 820.5 424 813.5M429 810l-5 3.5 4.5 4.5" stroke="#0f0" />
        </g>
        <g fontSize="8" fontWeight="700" textAnchor="middle">
          <text x="466" y="776" fill="#0000ff">Z</text>
          <text x="514" y="818" fill="#f00">X</text>
          <text x="419" y="816" fill="#0f0">Y</text>
        </g>

        {/* UCS */}
        <g stroke="#fff">
          <path d="M330.5 946.5h15v15h-15zM337.5 887v67.5H405M330.5 886.5h15l-7.5-22zM405.5 947v14.5l22.5-7z" />
        </g>
        <g fontSize="21" fill="#fff" textAnchor="middle" fontFamily="Liberation Sans, sans-serif">
          <text x="337" y="847">Y</text>
          <text x="450" y="962">X</text>
        </g>
      </g>
    </svg>
  );
}

function CommandLine() {
  return (
    <div className="absolute -bottom-[2px] left-[260px] flex h-[35px] w-1/2 border border-[#38393b] bg-[#151618]">
      <div className="flex w-8 shrink-0 items-start bg-[#2b2c30] pt-[7px] pl-[3px]">
        <svg width="4" height="14" viewBox="0 0 4 14" stroke="#fff"><path d="M.5 0v14M3.5 0v14" strokeDasharray="1 1" /></svg>
        <button aria-label="Command history" className="ml-[10px]">
          <svg width="10" height="11" viewBox="0 0 10 11" stroke="#f0f0f0" strokeWidth="2"><path d="M0 1h10M0 5h10M0 9h10" /></svg>
        </button>
      </div>
      <label htmlFor="command" className="flex items-center pl-[7px] font-['Liberation_Sans',sans-serif] text-[15px] text-[#c8c8c8]">
        <svg className="mr-[7px]" width="16" height="16" viewBox="0 0 16 16"><rect width="16" height="16" rx="2" fill="#c8c8c8" /><path d="M3 4l4 4-4 4M8 12h5" fill="none" stroke="#222" strokeWidth="1.5" /></svg>
        Command:
      </label>
      <input id="command" className="min-w-0 flex-1 bg-transparent px-1 text-[15px] text-[#c8c8c8] outline-none" />
    </div>
  );
}

const pagers: [string, string][] = [
  ['First layout', 'M1 1h2v10H1zM10 1v10L4 6z'],
  ['Previous layout', 'M9 1v10L3 6z'],
  ['Next layout', 'M3 1v10l6-5z'],
  ['Last layout', 'M9 1h2v10H9zM2 1v10l6-5z'],
];

function DrawingArea() {
  return (
    <main className="flex min-w-0 flex-1 flex-col border-x border-black bg-[#1b1c1d] px-[2px]">
      <div className="flex h-[25px] shrink-0 items-end">
        <div className="flex h-[23px] items-center border-l-2 border-[#159a90] bg-[#3a3a3b] pr-[5px] pl-[5px]">
          <button className="text-[13px] font-bold text-[#bfbfbf]">Base</button>
          <button aria-label="Close Base" className="ml-[11px]">
            <svg width="11" height="11" viewBox="0 0 11 11" stroke="#c8c8c8" strokeWidth="1.5"><path d="M1 1l9 9M10 1l-9 9" /></svg>
          </button>
        </div>
        <button aria-label="New tab" className="ml-px flex h-[23px] w-5 items-center justify-center bg-[#2b2b2c]">
          <svg width="11" height="11" viewBox="0 0 11 11" stroke="#c8c8c8" strokeWidth="2"><path d="M5.5 0v11M0 5.5h11" /></svg>
        </button>
        <button aria-label="Tab list" className="mr-[4px] mb-2 ml-auto">
          <svg width="11" height="6" viewBox="0 0 11 6" fill="#fff"><path d="M0 0h11L5.5 6z" /></svg>
        </button>
      </div>
      <div className="relative min-h-0 flex-1 border-2 border-[#00bfcb] bg-black">
        <div className="absolute inset-0 overflow-hidden">
          <Canvas />
        </div>
        <div className="absolute top-px left-px flex h-[25px] items-center bg-[#4a4a4a]/60 pr-[10px] pb-px pl-3 font-['Liberation_Sans',sans-serif] text-[12px] text-white">
          CIM Mode &gt; BASE &gt; Base
        </div>
        <CommandLine />
        <div className="absolute right-[32px] bottom-[3px] flex h-6 w-[182px] items-center justify-center rounded-[4px] border border-[#3a3a3a] bg-[#242424] pt-[2px] text-[12px] text-[#d0d0d0]">
          788.4565,-7953.2714,0.0000
        </div>
        <button aria-label="Display options" className="absolute -right-[2px] bottom-0 flex h-[30px] w-[30px] items-center justify-center bg-[#242526]">
          <svg width="17" height="17" viewBox="0 0 17 17" fill="#f2f2f2"><rect width="7" height="7" rx="1" /><rect x="10" width="7" height="7" rx="1" /><rect y="10" width="7" height="7" rx="1" /><rect x="10" y="10" width="7" height="7" rx="1" /></svg>
        </button>
      </div>
      <div className="flex h-[27px] shrink-0 items-start border-b-2 border-[#3a3a3a] pt-[3px] pl-px font-['Liberation_Sans',sans-serif] text-[11px]">
        {pagers.map(([label, d]) => (
          <button key={label} aria-label={label} className="mr-[3px] flex h-5 w-[19px] items-center justify-center bg-[#303033]">
            <svg width="12" height="12" viewBox="0 0 12 12" fill="#d8d8d8"><path d={d} /></svg>
          </button>
        ))}
        <button className="h-5 w-[74px] bg-[#3c3d3f] pr-[16px] font-bold text-[#d0d0d0] [clip-path:polygon(0_0,100%_0,74%_100%,0_100%)]">Model</button>
        <button className="-ml-[15px] h-5 w-[76px] bg-[#26282a] text-[#858585] [clip-path:polygon(20%_0,100%_0,74%_100%,0_100%)]">Layout1</button>
        <span className="ml-[6px] h-5 w-5 border-l border-[#d0d0d0] bg-[#303134]" />
      </div>
    </main>
  );
}

export default function App() {
  return (
    <div className="flex h-screen min-w-[1200px] flex-col overflow-hidden bg-[#272828] font-['Noto_Sans',sans-serif] text-[#c9c9c9]">
      <TitleBar />
      <PropertyBar />
      <div className="flex h-[34px] shrink-0">
        <ToolGroup tools={structureTools} />
        <span className="w-[25px] shrink-0" />
        <Overflow />
        <ToolGroup tools={dimensionTools} />
        <Overflow />
        <ToolGroup tools={sectionTools} />
        <Overflow />
        <ToolGroup tools={tableTools} />
        <Overflow />
        <ToolGroup tools={drawingTools} />
        <Overflow />
      </div>
      <div className="flex h-[34px] shrink-0 bg-[#1b1b1b]">
        <div className="flex bg-[#272828] pr-[2px]">
          <ToolGroup tools={editTools} />
        </div>
      </div>
      <div className="flex min-h-0 flex-1">
        <aside className="flex w-[300px] shrink-0 flex-col">
          <CimView />
          <ObjectPanel />
        </aside>
        <DrawingArea />
        <aside className="flex w-[300px] shrink-0 flex-col">
          <CadView />
          <Properties />
        </aside>
      </div>
    </div>
  );
}
